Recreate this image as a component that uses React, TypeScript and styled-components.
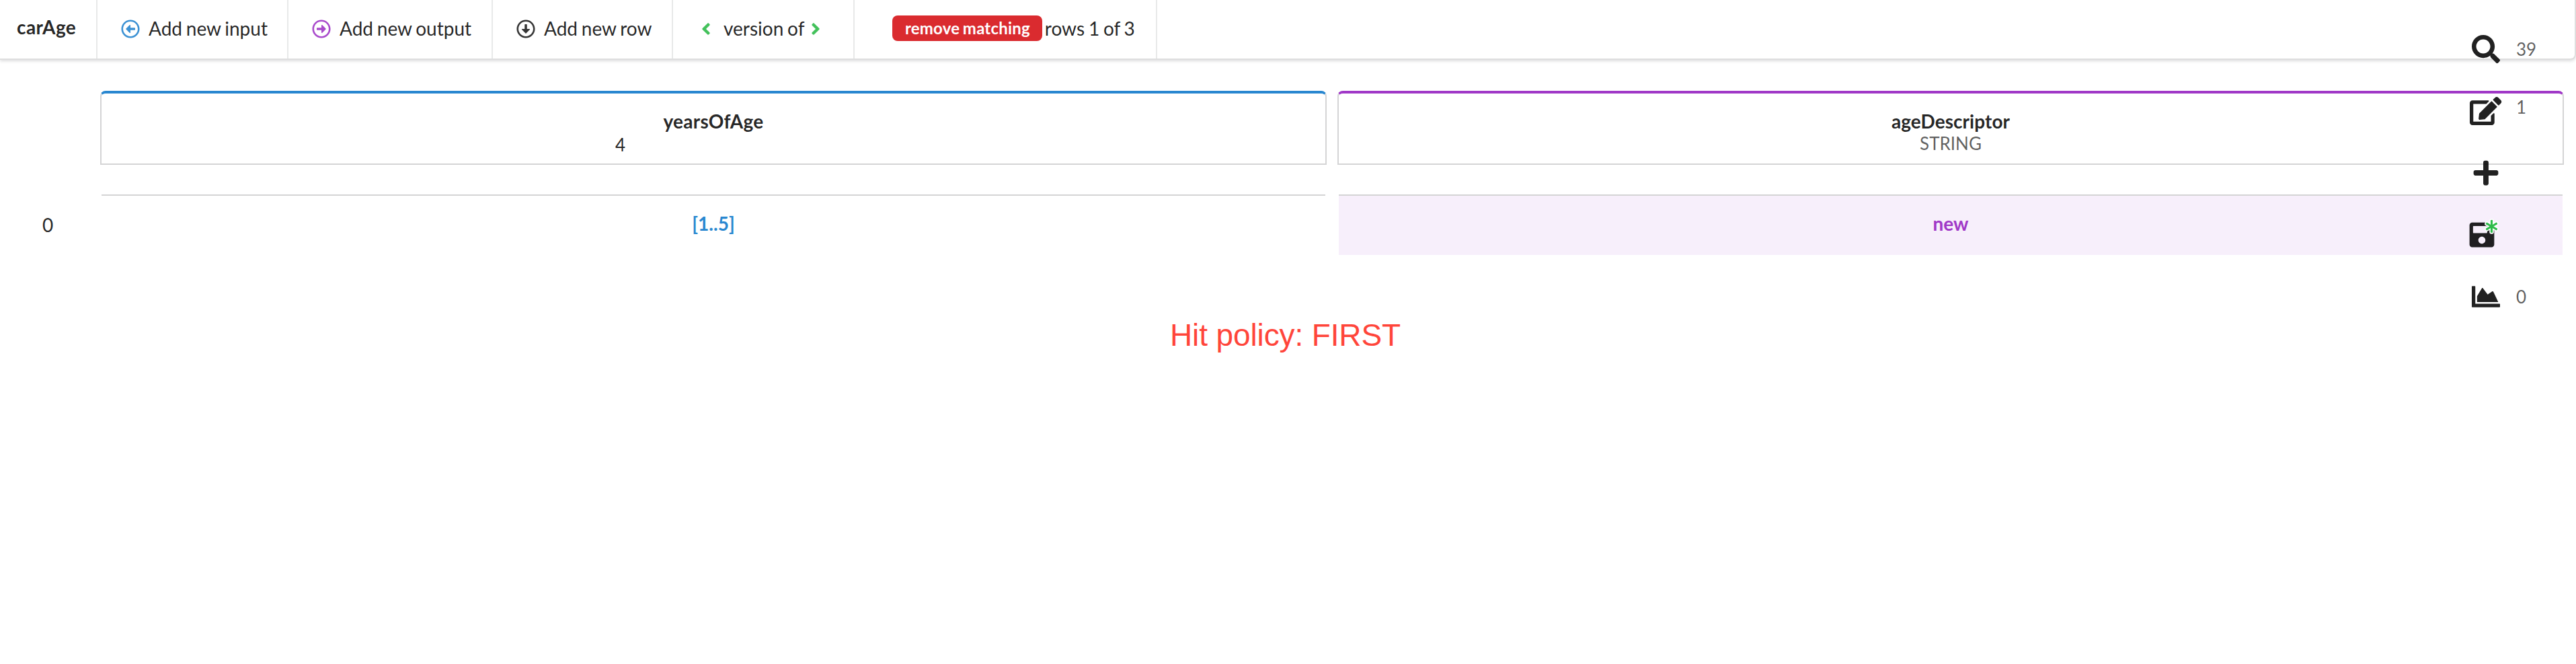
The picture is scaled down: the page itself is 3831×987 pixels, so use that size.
import React from "react";
import styled, { createGlobalStyle } from "styled-components";
import {
  FaAngleLeft,
  FaAngleRight,
  FaAsterisk,
  FaChartArea,
  FaEdit,
  FaPlus,
  FaRegArrowAltCircleDown,
  FaRegArrowAltCircleLeft,
  FaRegArrowAltCircleRight,
  FaSave,
  FaSearch,
} from "react-icons/fa";

const BLUE = "#2987d0";
const PURPLE = "#a038c7";
const GREEN = "#2fbb4a";
const TEXT = "rgba(0, 0, 0, 0.87)";
const MUTED = "rgba(0, 0, 0, 0.63)";

const GlobalStyle = createGlobalStyle`
  *, *::before, *::after { box-sizing: border-box; }
  body {
    margin: 0;
    background: #fff;
    font-family: Lato, "Liberation Sans", sans-serif;
    font-size: 28px;
    line-height: 40px;
    color: ${TEXT};
  }
`;

const Page = styled.div`
  position: relative;
  min-height: 987px;
  overflow: hidden;
`;

const Menu = styled.nav`
  display: flex;
  height: 89px;
  border: 2px solid rgba(34, 36, 38, 0.15);
  border-width: 0 2px 2px 0;
  border-radius: 0 0 8px 0;
  box-shadow: 0 2px 4px 0 rgba(34, 36, 38, 0.15);
`;

const Item = styled.div<{ $width: number }>`
  display: flex;
  align-items: center;
  width: ${(p) => p.$width}px;
  padding: 0 0 3px 32px;
  border-right: 2px solid rgba(34, 36, 38, 0.1);
  white-space: nowrap;
  word-spacing: -1.4px;
`;

const Title = styled(Item)`
  padding: 0 0 7px 25px;
  font-weight: 700;
  letter-spacing: 0.45px;
`;

const Icon = styled.span<{ $color?: string; $gap?: number }>`
  display: flex;
  justify-content: center;
  width: 34px;
  margin-right: ${(p) => p.$gap ?? 10}px;
  padding-top: 1px;
  font-size: 28px;
  color: ${(p) => p.$color ?? TEXT};
  opacity: 0.9;
`;

const Label = styled.span`
  height: 38px;
  margin: 0 4px 0 24px;
  padding: 0 18px 0 19px;
  border-radius: 8px;
  background: #da2b2f;
  color: #fff;
  font-size: 24px;
  font-weight: 700;
  line-height: 37px;
  letter-spacing: 0.2px;
`;

const Table = styled.section`
  display: grid;
  grid-template-columns: 1824px 1824px;
  column-gap: 16px;
  margin: 46px 0 0 149px;
`;

const Header = styled.div<{ $accent: string }>`
  height: 110px;
  padding-top: 21px;
  border: 2px solid #d4d4d5;
  border-top: 4px solid ${(p) => p.$accent};
  border-radius: 8px 8px 0 0;
  text-align: center;
`;

const FieldName = styled.div<{ $spacing?: number }>`
  height: 40px;
  font-weight: 700;
  letter-spacing: ${(p) => p.$spacing ?? 0}px;
`;

const FieldType = styled.div`
  margin-top: -7px;
  font-size: 26px;
  color: ${MUTED};
`;

const SampleValue = styled(FieldType)`
  margin-top: -5px;
  padding-left: 764px;
  text-align: left;
  color: ${TEXT};
`;

const Row = styled.section`
  display: grid;
  grid-template-columns: 151px 1820px 1820px;
  column-gap: 0;
  height: 90px;
  margin-top: 44px;
`;

const RowIndex = styled.div`
  padding: 25px 0 0 63px;
`;

const Cell = styled.div<{ $color: string; $fill?: string; $offset?: number }>`
  margin-left: ${(p) => p.$offset ?? 0}px;
  width: 1820px;
  padding-top: 21px;
  border-top: 2px solid #d4d4d5;
  background: ${(p) => p.$fill ?? "transparent"};
  color: ${(p) => p.$color};
  font-weight: 700;
  text-align: center;
`;

const Policy = styled.div`
  margin: 89px 0 0 1740px;
  font-family: "Liberation Sans", Helvetica, sans-serif;
  font-size: 46px;
  line-height: 60px;
  letter-spacing: -0.12px;
  color: #ff453a;
`;

const SideBar = styled.aside`
  position: absolute;
  top: 27px;
  left: 3668px;
  width: 130px;
`;

const Tool = styled.div`
  display: flex;
  align-items: center;
  height: 92px;
  font-size: 42px;
`;

const ToolIcon = styled.span<{ $width?: number }>`
  position: relative;
  display: flex;
  justify-content: center;
  width: ${(p) => p.$width ?? 58}px;
`;

const EditIcon = styled(FaEdit)`
  width: 1.125em;
`;

const Corner = styled.span`
  position: absolute;
  top: -1px;
  left: 28px;
  display: flex;
  font-size: 19px;
  color: ${GREEN};

  svg {
    overflow: visible;
    stroke: #fff;
    stroke-width: 90px;
    paint-order: stroke;
  }
`;

const Count = styled.span<{ $lift?: number }>`
  margin: 0 0 ${(p) => p.$lift ?? 0}px 16px;
  font-size: 26px;
  color: ${MUTED};
`;

export default function App() {
  return (
    <Page>
      <GlobalStyle />
      <Menu>
        <Title $width={145}>carAge</Title>
        <Item $width={284}>
          <Icon $color={BLUE}><FaRegArrowAltCircleLeft /></Icon>
          Add new input
        </Item>
        <Item $width={304}>
          <Icon $color={PURPLE}><FaRegArrowAltCircleRight /></Icon>
          Add new output
        </Item>
        <Item $width={268}>
          <Icon><FaRegArrowAltCircleDown /></Icon>
          Add new row
        </Item>
        <Item $width={270}>
          <Icon $color={GREEN} $gap={9}><FaAngleLeft /></Icon>
          version of
          <Icon $color={GREEN} $gap={0}><FaAngleRight /></Icon>
        </Item>
        <Item $width={450}>
          <Label>remove matching</Label>
          rows 1 of 3
        </Item>
      </Menu>

      <Table>
        <Header $accent={BLUE}>
          <FieldName $spacing={0.27}>yearsOfAge</FieldName>
          <SampleValue>4</SampleValue>
        </Header>
        <Header $accent={PURPLE}>
          <FieldName $spacing={0.07}>ageDescriptor</FieldName>
          <FieldType>STRING</FieldType>
        </Header>
      </Table>

      <Row>
        <RowIndex>0</RowIndex>
        <Cell $color={BLUE}>[1..5]</Cell>
        <Cell $color={PURPLE} $fill="#f7effb" $offset={20}>new</Cell>
      </Row>

      <Policy>Hit policy: FIRST</Policy>

      <SideBar>
        <Tool>
          <ToolIcon><FaSearch /></ToolIcon>
          <Count>39</Count>
        </Tool>
        <Tool>
          <ToolIcon><EditIcon /></ToolIcon>
          <Count $lift={12}>1</Count>
        </Tool>
        <Tool>
          <ToolIcon><FaPlus /></ToolIcon>
        </Tool>
        <Tool>
          <ToolIcon $width={46}>
            <FaSave />
            <Corner><FaAsterisk /></Corner>
          </ToolIcon>
        </Tool>
        <Tool>
          <ToolIcon><FaChartArea /></ToolIcon>
          <Count>0</Count>
        </Tool>
      </SideBar>
    </Page>
  );
}
